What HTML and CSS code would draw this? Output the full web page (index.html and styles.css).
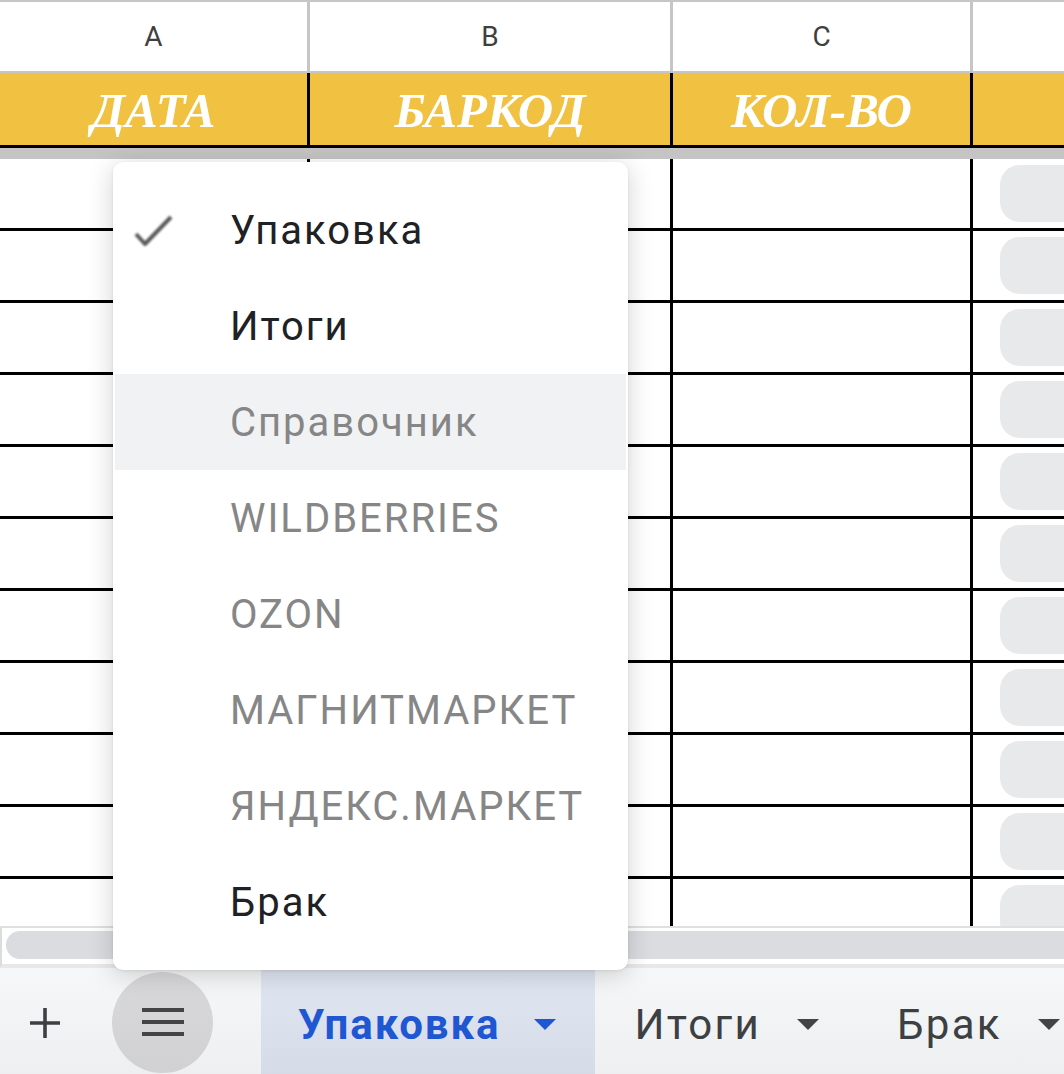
FILE: index.html
```html
<!DOCTYPE html>
<html lang="ru">
<head>
<meta charset="utf-8">
<title>Sheet</title>
<link rel="stylesheet" href="styles.css">
</head>
<body>
<div class="app">
  <div class="grid-area">
    <div class="row colhead">
      <div class="cell">A</div>
      <div class="cell">B</div>
      <div class="cell">C</div>
      <div class="cell last"></div>
    </div>
    <div class="row header">
      <div class="cell">ДАТА</div>
      <div class="cell">БАРКОД</div>
      <div class="cell">КОЛ-ВО</div>
      <div class="cell last"></div>
    </div>
    <div class="freeze"></div>
    <div class="row body"><div class="cell"></div><div class="cell"></div><div class="cell"></div><div class="cell last"><span class="chip"></span></div></div>
    <div class="row body"><div class="cell"></div><div class="cell"></div><div class="cell"></div><div class="cell last"><span class="chip"></span></div></div>
    <div class="row body"><div class="cell"></div><div class="cell"></div><div class="cell"></div><div class="cell last"><span class="chip"></span></div></div>
    <div class="row body"><div class="cell"></div><div class="cell"></div><div class="cell"></div><div class="cell last"><span class="chip"></span></div></div>
    <div class="row body"><div class="cell"></div><div class="cell"></div><div class="cell"></div><div class="cell last"><span class="chip"></span></div></div>
    <div class="row body"><div class="cell"></div><div class="cell"></div><div class="cell"></div><div class="cell last"><span class="chip"></span></div></div>
    <div class="row body"><div class="cell"></div><div class="cell"></div><div class="cell"></div><div class="cell last"><span class="chip"></span></div></div>
    <div class="row body"><div class="cell"></div><div class="cell"></div><div class="cell"></div><div class="cell last"><span class="chip"></span></div></div>
    <div class="row body"><div class="cell"></div><div class="cell"></div><div class="cell"></div><div class="cell last"><span class="chip"></span></div></div>
    <div class="row body"><div class="cell"></div><div class="cell"></div><div class="cell"></div><div class="cell last"><span class="chip"></span></div></div>
    <div class="row body"><div class="cell"></div><div class="cell"></div><div class="cell"></div><div class="cell last"><span class="chip"></span></div></div>
  </div>
  <div class="hscroll"><div class="thumb"></div></div>
  <div class="tabbar">
    <div class="add">
      <svg width="32" height="32" viewBox="0 0 32 32"><path d="M16 1v30M1 16h30" stroke="#3c4043" stroke-width="3.6" fill="none"/></svg>
    </div>
    <div class="allsheets">
      <svg width="42" height="28" viewBox="0 0 42 28"><path d="M0 2h42M0 14h42M0 26h42" stroke="#444" stroke-width="4" fill="none"/></svg>
    </div>
    <div class="tab active"><span>Упаковка</span><i class="caret"></i></div>
    <div class="tab"><span>Итоги</span><i class="caret"></i></div>
    <div class="tab"><span>Брак</span><i class="caret"></i></div>
  </div>

  <div class="menu">
    <div class="item dark">
      <span class="ico"><svg width="40" height="34" viewBox="0 0 40 34"><path d="M3 21l9 10L38 4" stroke="#5a5a5a" stroke-width="4" fill="none" stroke-linejoin="round"/></svg></span>Упаковка
    </div>
    <div class="item dark"><span class="ico"></span>Итоги</div>
    <div class="item muted hover"><span class="ico"></span>Справочник</div>
    <div class="item muted"><span class="ico"></span>WILDBERRIES</div>
    <div class="item muted"><span class="ico"></span>OZON</div>
    <div class="item muted"><span class="ico"></span>МАГНИТМАРКЕТ</div>
    <div class="item muted"><span class="ico"></span>ЯНДЕКС.МАРКЕТ</div>
    <div class="item dark"><span class="ico"></span>Брак</div>
  </div>
</div>
</body>
</html>
```
FILE: styles.css
```css
* { box-sizing: border-box; }
html, body { margin: 0; padding: 0; background: #fff; }
body { font-family: Roboto, "Noto Sans", "Liberation Sans", sans-serif; }

.app {
  position: relative;
  width: 1064px;
  height: 1074px;
  display: flex;
  flex-direction: column;
  overflow: hidden;
}

.grid-area {
  flex: 1;
  overflow: hidden;
  min-height: 0;
}

.row {
  display: grid;
  grid-template-columns: 310px 363px 300px 1fr;
}
.cell {
  border-right: 3px solid #000;
}
.cell.last { border-right: none; }

.colhead {
  height: 73px;
  border-top: 2px solid #c6c6c6;
  border-bottom: 2px solid #c6c6c6;
}
.colhead .cell {
  border-right-color: #c6c6c6;
  display: flex;
  align-items: center;
  justify-content: center;
  font-family: Roboto, "Liberation Sans", Arial, sans-serif;
  font-size: 28px;
  color: #3f3f3f;
}

.header {
  height: 75px;
  background: #f1c142;
  border-bottom: 3px solid #000;
}
.header .cell {
  display: flex;
  align-items: center;
  justify-content: center;
  font-family: "Liberation Serif", "Times New Roman", serif;
  font-weight: bold;
  font-style: italic;
  font-size: 49px;
  color: #fff;
  padding-top: 2px;
}

.freeze {
  height: 11px;
  background: #c4c4c4;
}

.body {
  height: 72px;
  border-bottom: 3px solid #000;
}
.body .cell.last {
  padding: 6px 0 6px 27px;
}
.chip {
  display: block;
  height: 57px;
  background: #e8e9eb;
  border-radius: 20px 0 0 20px;
}

.hscroll {
  height: 42px;
  flex: none;
  border-top: 2px solid #dfe0e0;
  border-bottom: 4px solid #e7e8e7;
  padding: 3px 0 5px 2px;
  border-left: 2px solid #dcdcdc;
}
.thumb {
  height: 28px;
  margin-left: 2px;
  background: #dadce0;
  border-radius: 14px 0 0 14px;
}

.tabbar {
  height: 106px;
  flex: none;
  background: linear-gradient(#f6f7f8, #eeeff0);
  display: flex;
  align-items: center;
}
.tabbar > * { flex: none; }
.add {
  width: 90px;
  height: 100%;
  display: flex;
  align-items: center;
  justify-content: center;
  padding-top: 4px;
}
.allsheets {
  width: 101px;
  height: 101px;
  border-radius: 50%;
  background: linear-gradient(#d9d9db, #d1d1d3);
  display: flex;
  align-items: center;
  justify-content: center;
  margin-left: 22px;
  margin-top: 2px;
}
.tab {
  height: 100%;
  display: flex;
  align-items: center;
  gap: 36px;
  padding: 6px 39px 0;
  font-size: 42px;
  letter-spacing: 2.3px;
  color: #3c4043;
  white-space: nowrap;
}
.tab.active {
  margin-left: 48px;
  padding: 6px 39px 0 37px;
  gap: 34px;
  background: linear-gradient(#e0e6f2, #d5dbe7);
  color: #1f56d2;
  font-weight: bold;
  letter-spacing: 1.9px;
}
.caret {
  width: 0;
  height: 0;
  border-left: 11.5px solid transparent;
  border-right: 11.5px solid transparent;
  border-top: 11.5px solid #444;
}
.tab.active .caret { border-top-color: #1f56d2; }

.menu {
  position: absolute;
  left: 113px;
  top: 162px;
  width: 515px;
  height: 808px;
  background: #fff;
  border-radius: 10px;
  box-shadow: 0 4px 26px rgba(0, 0, 0, 0.18), 0 1px 3px rgba(0, 0, 0, 0.08);
  padding: 20px 2px;
}
.item {
  height: 96px;
  display: flex;
  align-items: center;
  padding-left: 18px;
  font-size: 40px;
  letter-spacing: 2px;
}
.item .ico {
  width: 40px;
  margin-right: 57px;
  display: flex;
  align-items: center;
  filter: blur(0.8px);
}
.item.dark { color: #202124; }
.item.muted { color: #868686; }
.item.hover { background: #f1f2f4; }
```
